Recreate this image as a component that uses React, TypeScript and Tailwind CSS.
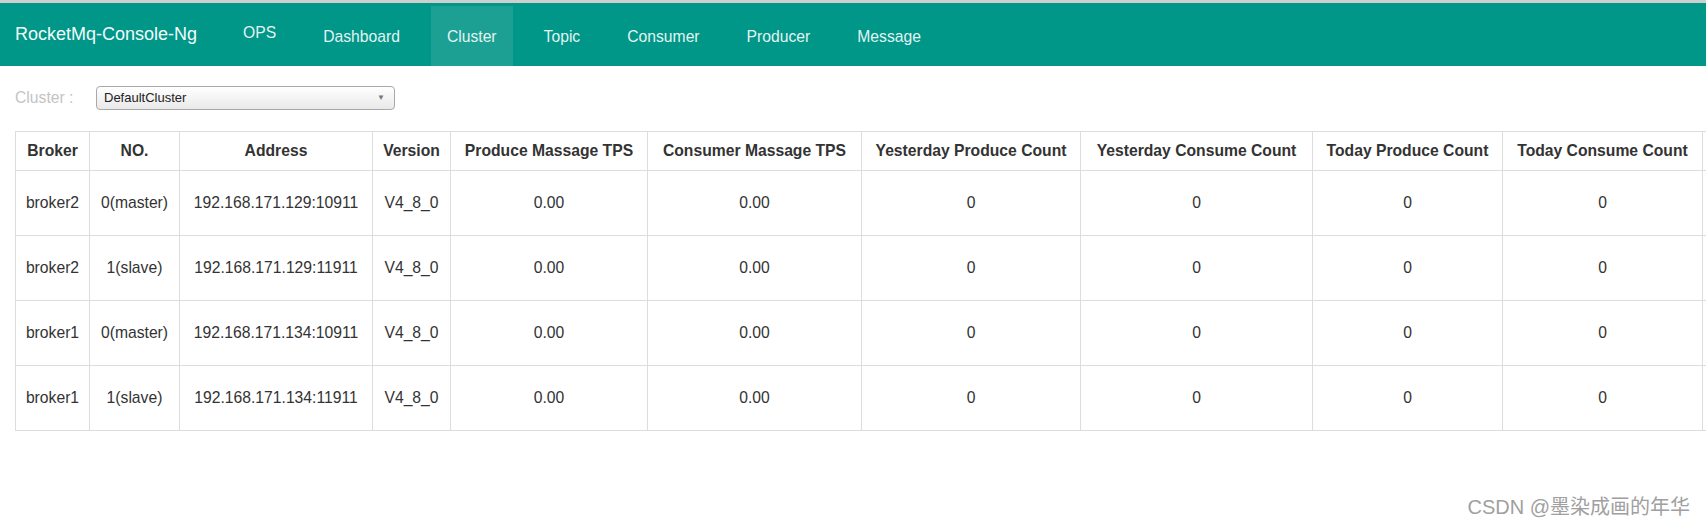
import React from 'react';

const NAV_ITEMS = ['OPS', 'Dashboard', 'Cluster', 'Topic', 'Consumer', 'Producer', 'Message'];

const COLUMNS = [
  { title: 'Broker', width: 74 },
  { title: 'NO.', width: 90 },
  { title: 'Address', width: 193 },
  { title: 'Version', width: 78 },
  { title: 'Produce Massage TPS', width: 197 },
  { title: 'Consumer Massage TPS', width: 214 },
  { title: 'Yesterday Produce Count', width: 219 },
  { title: 'Yesterday Consume Count', width: 232 },
  { title: 'Today Produce Count', width: 190 },
  { title: 'Today Consume Count', width: 200 },
  { title: 'Operation', width: 130 },
];

const ROWS = [
  ['broker2', '0(master)', '192.168.171.129:10911'],
  ['broker2', '1(slave)', '192.168.171.129:11911'],
  ['broker1', '0(master)', '192.168.171.134:10911'],
  ['broker1', '1(slave)', '192.168.171.134:11911'],
];

const Navbar: React.FC = () => (
  <div className="border-t-[3px] border-[#cfcfcf] bg-[#009688] h-[66px] flex items-end">
    <div className="w-[227px] h-[63px] flex items-center pl-[15px] text-[18px] text-[#f2fbfa]">
      RocketMq-Console-Ng
    </div>
    <nav className="flex h-[60px] gap-[15px]">
      {NAV_ITEMS.map(item => (
        <div
          key={item}
          className={`px-[16px] flex items-center text-[15.7px] text-[#e2f4f2] ${item === 'Cluster' ? 'bg-[#1ba093]' : ''} ${item === 'OPS' ? 'pb-[6px]' : 'pt-[2px]'}`}
        >
          {item}
        </div>
      ))}
    </nav>
  </div>
);

const App: React.FC = () => {
  return (
    <div
      className="relative w-[1706px] h-[529px] overflow-hidden bg-white text-[#333]"
      style={{ fontFamily: '"Liberation Sans", Arial, sans-serif' }}
    >
      <Navbar />
      <div className="pl-[15px]">
        <div className="flex items-center h-[24px] mt-[20px]">
          <span className="w-[81px] text-[15.7px] text-[#c4c4c4]">Cluster :</span>
          <div className="w-[299px] h-[24px] flex items-center justify-between border border-[#a9a9a9] rounded-[4px] bg-gradient-to-b from-white to-[#e9e9e9] pl-[7px] pr-[9px] text-[13px] text-[#222]">
            <span>DefaultCluster</span>
            <span className="text-[8px] text-[#777]">▼</span>
          </div>
        </div>
        <div className="mt-[21px]">
          <table className="table-fixed border-collapse text-[15.7px]" style={{ width: COLUMNS.reduce((s, c) => s + c.width, 0) }}>
            <colgroup>
              {COLUMNS.map(c => (
                <col key={c.title} style={{ width: c.width }} />
              ))}
            </colgroup>
            <thead>
              <tr className="h-[39px]">
                {COLUMNS.map(c => (
                  <th key={c.title} className="border border-[#dddddd] font-bold text-center align-middle whitespace-nowrap px-[8px] text-[#333]">
                    {c.title === 'Operation' ? '' : c.title}
                  </th>
                ))}
              </tr>
            </thead>
            <tbody>
              {ROWS.map((r, i) => (
                <tr key={i} className="h-[65px]">
                  <td className="border border-[#dddddd] text-center align-middle whitespace-nowrap">{r[0]}</td>
                  <td className="border border-[#dddddd] text-center align-middle whitespace-nowrap">{r[1]}</td>
                  <td className="border border-[#dddddd] text-center align-middle whitespace-nowrap">{r[2]}</td>
                  <td className="border border-[#dddddd] text-center align-middle whitespace-nowrap">V4_8_0</td>
                  <td className="border border-[#dddddd] text-center align-middle">0.00</td>
                  <td className="border border-[#dddddd] text-center align-middle">0.00</td>
                  <td className="border border-[#dddddd] text-center align-middle">0</td>
                  <td className="border border-[#dddddd] text-center align-middle">0</td>
                  <td className="border border-[#dddddd] text-center align-middle">0</td>
                  <td className="border border-[#dddddd] text-center align-middle">0</td>
                  <td className="border border-[#dddddd]"></td>
                </tr>
              ))}
            </tbody>
          </table>
        </div>
      </div>
      <div
        className="absolute right-[16px] bottom-[7px] text-[20px] text-[#a0a0a0]"
        style={{ fontFamily: '"Liberation Sans", "Noto Sans CJK SC", sans-serif' }}
      >
        CSDN @墨染成画的年华
      </div>
    </div>
  );
};

export default App;
